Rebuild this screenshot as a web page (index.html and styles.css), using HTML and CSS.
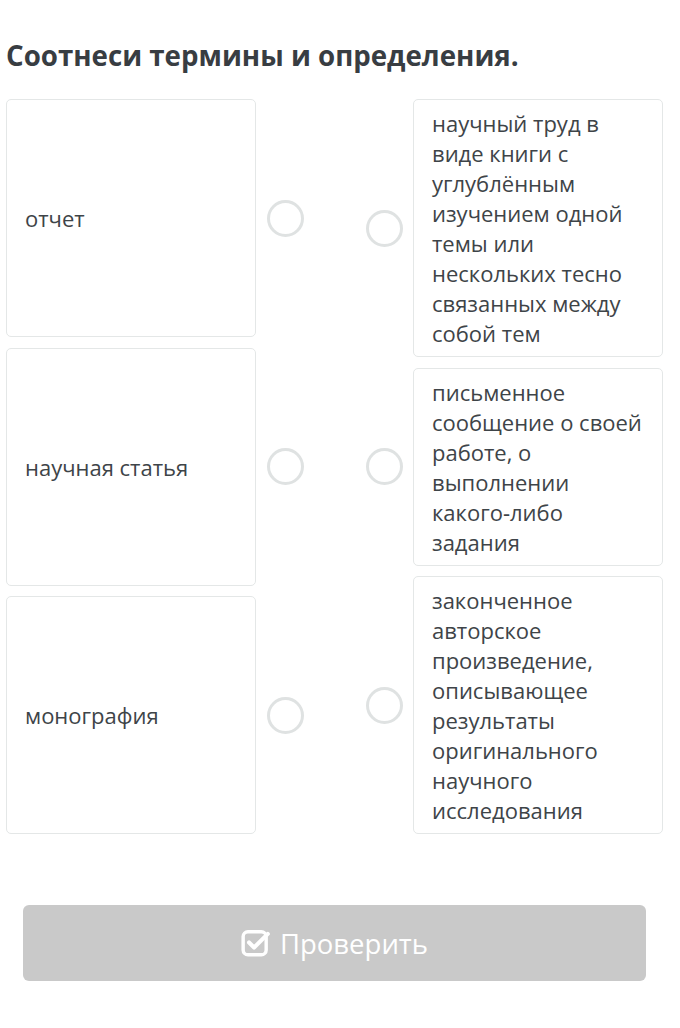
FILE: index.html
```html
<!DOCTYPE html>
<html lang="ru">
<head>
<meta charset="utf-8">
<title>Соотнеси термины и определения</title>
<link rel="stylesheet" href="styles.css">
</head>
<body>
<div class="page">
  <h1 class="title">Соотнеси термины и определения.</h1>
  <div class="match">
    <div class="col col-left">
      <div class="item">
        <div class="card card-term">отчет</div>
        <span class="dot"></span>
      </div>
      <div class="item">
        <div class="card card-term">научная статья</div>
        <span class="dot"></span>
      </div>
      <div class="item">
        <div class="card card-term">монография</div>
        <span class="dot"></span>
      </div>
    </div>
    <div class="col col-right">
      <div class="item">
        <span class="dot"></span>
        <div class="card card-def">научный труд в виде книги с углублённым изучением одной темы или нескольких тесно связанных между собой тем</div>
      </div>
      <div class="item">
        <span class="dot"></span>
        <div class="card card-def">письменное сообщение о своей работе, о выполнении какого&#8209;либо задания</div>
      </div>
      <div class="item">
        <span class="dot"></span>
        <div class="card card-def">законченное авторское произведение, описывающее результаты оригинального научного исследования</div>
      </div>
    </div>
  </div>
  <div class="actions">
    <button class="btn" type="button">
      <svg class="btn-icon" viewBox="0 0 28 28" aria-hidden="true">
        <rect x="2" y="3.5" width="21.5" height="21.5" rx="4.5" fill="none" stroke="#fff" stroke-width="3.2"/>
        <path d="M7.5 13.5 L12.2 18.2 L25 5.5" fill="none" stroke="#fff" stroke-width="3.8" stroke-linecap="round" stroke-linejoin="round"/>
      </svg>
      <span>Проверить</span>
    </button>
  </div>
</div>
</body>
</html>
```

FILE: styles.css
```css
* { box-sizing: border-box; }
html, body { margin: 0; padding: 0; background: #fff; }
body {
  font-family: "Open Sans", "Noto Sans", sans-serif;
  color: #3e4448;
}
.page {
  width: 680px;
  padding: 0 17px 0 6px;
}
.title {
  margin: 0;
  padding-top: 35px;
  font-size: 27.7px;
  line-height: 40px;
  font-weight: 700;
  color: #383d42;
  letter-spacing: 0;
}
.match {
  margin-top: 24px;
  display: flex;
  justify-content: space-between;
  align-items: stretch;
}
.col {
  display: flex;
  flex-direction: column;
  gap: 10.5px;
}
.col-left .item { flex: 1; }
.item {
  display: flex;
  align-items: center;
}
.card {
  width: 250px;
  border: 1px solid #e4e7e7;
  border-radius: 5px;
  background: #fff;
  font-size: 22px;
  line-height: 30px;
  padding: 8px 14px 8px 18px;
}
.card-term {
  align-self: stretch;
  display: flex;
  align-items: center;
}
.dot {
  flex: none;
  width: 37px;
  height: 37px;
  border-radius: 50%;
  border: 3px solid #dfe2e2;
}
.col-left .dot { margin-left: 11px; }
.col-right .dot { margin-right: 10px; }
.actions {
  padding: 71px 0 0 17px;
}
.btn {
  width: 623px;
  height: 76px;
  border: none;
  border-radius: 6px;
  background: #c9c9c9;
  color: #fff;
  font-family: "Open Sans", "Noto Sans", sans-serif;
  font-size: 27.5px;
  display: flex;
  align-items: center;
  justify-content: center;
  gap: 9px;
  padding: 0;
}
.btn-icon {
  width: 30px;
  height: 30px;
}
```
